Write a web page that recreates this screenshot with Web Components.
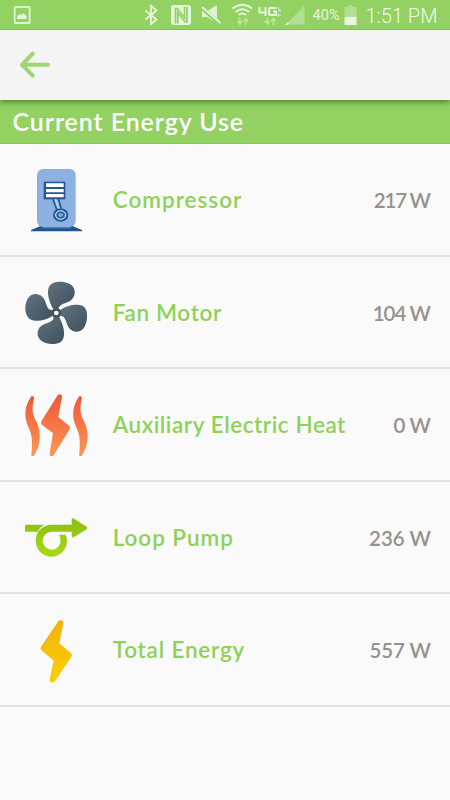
<!DOCTYPE html>
<html lang="en">
<head>
<meta charset="utf-8">
<title>Current Energy Use</title>
<style>
  body {
    margin: 0;
    background: #fafafa;
    font-family: Lato, "Liberation Sans", sans-serif;
  }
  energy-row[icon="compressor"] { --name-spacing: 1px; --value-spacing: -1.2px; }
  energy-row[icon="fan"] { --name-spacing: 0.65px; --value-spacing: -0.9px; }
  energy-row[icon="heat"] { --name-spacing: 0.57px; --value-spacing: -0.3px; }
  energy-row[icon="pump"] { --name-spacing: 0.95px; }
  energy-row[icon="bolt"] { --name-spacing: 0.8px; --value-spacing: -0.1px; }
</style>
</head>
<body>
<energy-app>
  <status-bar slot="status" battery="40%" time="1:51 PM"></status-bar>
  <nav-bar slot="nav"></nav-bar>
  <section-title slot="title">Current Energy Use</section-title>
  <energy-row icon="compressor" value="217 W">Compressor</energy-row>
  <energy-row icon="fan" value="104 W">Fan Motor</energy-row>
  <energy-row icon="heat" value="0 W">Auxiliary Electric Heat</energy-row>
  <energy-row icon="pump" value="236 W">Loop Pump</energy-row>
  <energy-row icon="bolt" value="557 W">Total Energy</energy-row>
</energy-app>

<script>
const icons = {
  compressor: `
    <svg width="75" height="80" viewBox="0 0 225 240">
      <path d="M33 210 L62 198 H157 L186 210 V214 H33Z" fill="#235487"/>
      <path d="M62 205 L72 201 H148 L158 205Z" fill="#4d85c2"/>
      <rect x="51" y="27" width="116" height="174" rx="18" fill="#8db1e2"/>
      <rect x="71" y="65" width="65" height="53" fill="#24588f"/>
      <path d="M78 70h53v11H78zM78 87h53v10H78zM78 102h53v10H78z" fill="#fff"/>
      <path d="M99 118 L111 151 M116 118 L123 145" stroke="#24588f" stroke-width="5"/>
      <path d="M106 118 L117 148" stroke="#c3d6ee" stroke-width="5"/>
      <ellipse cx="122" cy="165" rx="23" ry="20" fill="#24588f"/>
      <ellipse cx="122" cy="165" rx="15.500" ry="13" fill="#6b9bd2" stroke="#d5e4f5" stroke-width="3"/>
      <ellipse cx="122" cy="165" rx="10" ry="8" fill="#7da8dc" stroke="#24588f" stroke-width="4"/>
    </svg>`,
  fan: `
    <svg width="75" height="75" viewBox="0 0 225 225">
      <defs>
        <linearGradient id="g" x1="0" y1="0" x2="1" y2="1">
          <stop offset="0" stop-color="#61737e"/><stop offset="1" stop-color="#3d505c"/>
        </linearGradient>
      </defs>
      <g fill="url(#g)">
        <path d="M99 101 C88 82 78 50 88 34 C99 15 143 17 158 34 C170 50 164 72 146 80 C129 87 119 88 115 101Z"/>
        <path d="M121 104 C139 92 170 85 187 92 C207 100 205 146 188 163 C177 174 157 172 147 159 C136 141 138 124 121 122Z"/>
        <path d="M117 125 C129 145 138 178 128 194 C117 212 77 210 61 195 C47 180 52 157 69 149 C88 141 102 138 101 125Z"/>
        <path d="M97 123 C77 137 45 142 29 132 C10 118 13 79 29 64 C43 51 65 58 74 75 C82 93 80 103 97 106Z"/>
      </g>
      <circle cx="109" cy="114" r="15" fill="#40525e"/>
      <circle cx="109" cy="114" r="7" fill="#fff"/>
    </svg>`,
  heat: `
    <svg width="75" height="75" viewBox="0 -1 225 225">
      <defs>
        <linearGradient id="g" gradientUnits="userSpaceOnUse" x1="0" y1="20" x2="0" y2="205">
          <stop offset="0" stop-color="#ef5737"/><stop offset="1" stop-color="#fb9854"/>
        </linearGradient>
      </defs>
      <g fill="url(#g)">
        <path id="w" d="M33 25 C36 20 44 24 42 31 C34 65 38 77 50 102 C65 137 62 167 43 201 C40 206 33 204 34 198 C38 162 37 142 26 118 C10 83 14 53 33 25Z"/>
        <use href="#w" x="143.500"/>
        <path d="M113 21 C118 14 128 18 126 27 L115 86 L148 113 Q153 118 148 124 L102 199 C97 208 87 204 89 195 L99 135 L66 109 Q61 104 65 97Z"/>
      </g>
    </svg>`,
  pump: `
    <svg width="75" height="55" viewBox="0 0 225 165">
      <defs>
        <linearGradient id="g" gradientUnits="userSpaceOnUse" x1="0" y1="22" x2="0" y2="140">
          <stop offset="0" stop-color="#8cbd10"/><stop offset="1" stop-color="#a7da13"/>
        </linearGradient>
      </defs>
      <path fill="url(#g)" d="M18 44 H72 Q59 52 53 65 H18 Q15 65 15 62 V47 Q15 44 18 44Z"/>
      <path fill="url(#g)" d="M94 44 H155 V29 Q155 22 162 26 L200 50 Q204 54 200 58 L162 81 Q155 85 155 78 V65 H95 A27 27 0 1 0 120 82 Q121 76 115 74 H136 Q141 81 141 92 A47 48 0 1 1 94 44Z"/>
    </svg>`,
  bolt: `
    <svg width="75" height="75" viewBox="-30 -1.500 225 225">
      <defs>
        <linearGradient id="g" gradientUnits="userSpaceOnUse" x1="0" y1="20" x2="0" y2="210">
          <stop offset="0" stop-color="#f2b20c"/><stop offset="1" stop-color="#fad000"/>
        </linearGradient>
      </defs>
      <path fill="url(#g)" d="M84 25 C89 17 101 20 100 29 L88 90 L124 119 Q128 124 124 130 L75 203 C69 211 57 207 59 198 L71 141 L34 110 Q29 106 33 100Z"/>
    </svg>`,
};

class EnergyApp extends HTMLElement {
  constructor() {
    super();
    this.attachShadow({ mode: 'open' }).innerHTML = `
      <style>
        :host {
          display: flex;
          flex-direction: column;
          width: 450px;
          height: 800px;
          background: #fafafa;
          overflow: hidden;
        }
      </style>
      <slot name="status"></slot>
      <slot name="nav"></slot>
      <slot name="title"></slot>
      <slot></slot>
    `;
  }
}

class StatusBar extends HTMLElement {
  connectedCallback() {
    this.attachShadow({ mode: 'open' }).innerHTML = `
      <style>
        :host {
          display: flex;
          align-items: center;
          flex: none;
          box-sizing: border-box;
          height: 30px;
          padding: 0 12.500px 0 13px;
          background: #92d162;
          border-bottom: 1px solid #84c545;
          color: #e6f5db;
          font-family: Roboto, sans-serif;
          white-space: nowrap;
        }
        svg { display: block; flex: none; }
        .radios { margin: 0 7px 0 auto; }
        .pct { font-size: 14.500px; line-height: 30px; padding-top: 3px; }
        .cell { margin: 0 9px 0 4px; }
        .time { font-size: 20px; line-height: 30px; padding-top: 2px; font-weight: 300; color: #f0f9ea; }
      </style>
      <svg width="18" height="29" viewBox="0 0 18 29">
        <rect x="1.700" y="7" width="15" height="16" rx="1" fill="none" stroke="#dcf1cd" stroke-width="2"/>
        <path d="M4 19v-3l3-2 1.500 1 2-2 3 3v3z" fill="#e6f5db"/>
      </svg>
      <svg class="radios" width="166" height="29" viewBox="140 0 166 29">
        <path d="M145.500 10.500 L156.500 19.500 L151 24 V6 L156.500 10.500 L145.500 19.500" fill="none" stroke="#e6f5db" stroke-width="1.800"/>
        <rect x="171" y="5" width="20" height="20" rx="3" fill="#e6f5db"/>
        <path d="M175.500 23.500 V8.500 H177.500 L184.500 18 V6.500" fill="none" stroke="#92d162" stroke-width="1.700"/>
        <path d="M177.800 23.500 V12.500 L185 22 H187 V6.500" fill="none" stroke="#92d162" stroke-width="1.700"/>
        <path d="M202 11h5l10-6v18l-10-6h-5z" fill="#dff2d1"/>
        <path d="M201 7 L220 24" stroke="#92d162" stroke-width="4"/>
        <path d="M202 7 L220.500 23" stroke="#e6f5db" stroke-width="1.800"/>
        <g fill="none" stroke="#e6f5db" stroke-width="2">
          <path d="M232.500 8.500 Q242.300 1 252.200 8.500"/>
          <path d="M235.500 12 Q242.300 6.500 249.200 12"/>
          <path d="M238.500 15 Q242.300 12 246.200 15"/>
        </g>
        <g id="arrows" fill="none" stroke="#bde39f" stroke-width="1.700">
          <path d="M239.800 17.500v6m-2.300-2.500l2.300 3 2.300-3M245.800 25v-6m-2.300 2.500l2.300-3 2.300 3"/>
        </g>
        <use href="#arrows" x="27.500"/>
        <g fill="none" stroke="#e6f5db" stroke-width="2">
          <path d="M259.500 7v5.500h7.500M265.500 7v9M276.500 8h-6q-1.500 0-1.500 1.500v4q0 1.500 1.500 1.500h5.500v-3.500h-3"/>
        </g>
        <path d="M278.500 7v2.500h2.500M278 11h3M278.500 13.500v3.500M278.500 15h2.500" fill="none" stroke="#d3edbf"/>
        <path d="M286 24.500 L304.500 5.500 V24.500Z" fill="#b4df93"/>
        <path d="M285 25 L288.500 21.500 V25Z" fill="#e6f5db"/>
      </svg>
      <span class="pct">${this.getAttribute('battery')}</span>
      <svg class="cell" width="13" height="29" viewBox="0 0 13 29">
        <path d="M4.500 5h4v2h4v10H.500V7h4z" fill="#b4df93"/>
        <rect x=".500" y="17" width="12" height="8" fill="#e9f6df"/>
      </svg>
      <span class="time">${this.getAttribute('time')}</span>
    `;
  }
}

class NavBar extends HTMLElement {
  constructor() {
    super();
    this.attachShadow({ mode: 'open' }).innerHTML = `
      <style>
        :host {
          display: flex;
          align-items: center;
          flex: none;
          box-sizing: border-box;
          height: 70px;
          padding-left: 20px;
          background: #f4f4f4;
          box-shadow: 0 1px 7px rgba(30, 80, 0, 0.8);
          z-index: 1;
          clip-path: inset(0 0 -12px 0);
        }
      </style>
      <svg width="31" height="28" viewBox="0 0 31 28">
        <path d="M12.800 2.500 L2 13.800 L12.800 24.600 M2.500 13.800 H28" fill="none" stroke="#9ed474"
          stroke-width="4" stroke-linecap="round" stroke-linejoin="round"/>
      </svg>
    `;
  }
}

class SectionTitle extends HTMLElement {
  constructor() {
    super();
    this.attachShadow({ mode: 'open' }).innerHTML = `
      <style>
        :host {
          display: block;
          flex: none;
          box-sizing: border-box;
          height: 44px;
          padding-left: 12.500px;
          background: #92d162;
          border-bottom: 1px solid #86ca53;
          color: #fff;
          font-size: 25px;
          font-weight: 600;
          letter-spacing: 0.9px;
          line-height: 43px;
          white-space: nowrap;
        }
      </style>
      <slot></slot>
    `;
  }
}

class EnergyRow extends HTMLElement {
  connectedCallback() {
    this.attachShadow({ mode: 'open' }).innerHTML = `
      <style>
        :host {
          display: grid;
          grid-template-columns: 75px 1fr auto;
          column-gap: 17.700px;
          align-items: center;
          flex: none;
          box-sizing: border-box;
          height: 112.500px;
          padding: 1.500px 19px 0 20px;
          border-bottom: 2px solid #e2e2e2;
          font-size: 22.500px;
          font-weight: 600;
          line-height: 30px;
          white-space: nowrap;
        }
        svg { display: block; }
        .name { color: #8ed158; letter-spacing: var(--name-spacing, 0); }
        .value {
          color: #96918c;
          font-size: 20.500px;
          letter-spacing: var(--value-spacing, 0);
          margin-right: calc(-1 * var(--value-spacing, 0px));
        }
      </style>
      ${icons[this.getAttribute('icon')]}
      <span class="name"><slot></slot></span>
      <span class="value">${this.getAttribute('value')}</span>
    `;
  }
}

customElements.define('energy-app', EnergyApp);
customElements.define('status-bar', StatusBar);
customElements.define('nav-bar', NavBar);
customElements.define('section-title', SectionTitle);
customElements.define('energy-row', EnergyRow);
</script>
</body>
</html>
